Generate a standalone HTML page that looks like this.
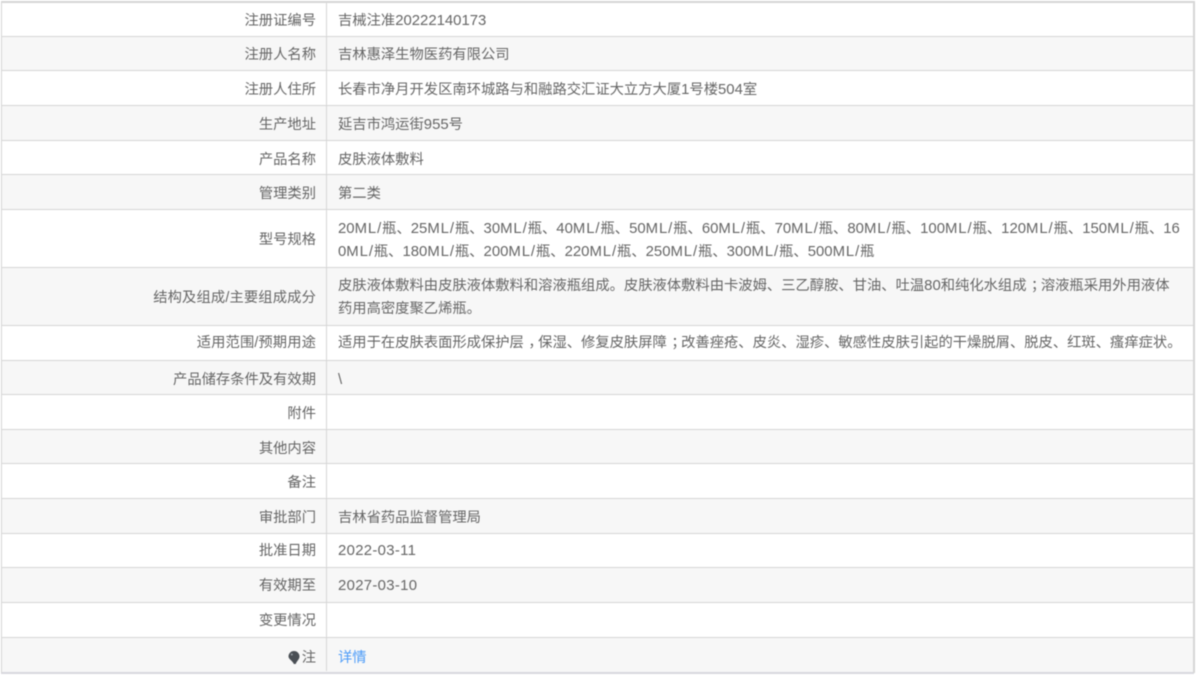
<!DOCTYPE html>
<html lang="zh-CN"><head><meta charset="utf-8"><title>注册信息</title>
<style>
html,body{margin:0;padding:0;background:#fff}
#p{position:relative;width:1200px;height:681px;overflow:hidden;background:#fff;font:14.3px/20px "Liberation Sans","Noto Sans CJK SC",sans-serif;color:#666;filter:blur(.4px)}
.r{position:absolute;left:1px;width:1193px;box-sizing:border-box;border-bottom:1px solid #d6d6d6}
.r.g{background:#f7f7f7}
.l{position:absolute;right:878px;top:2px;bottom:-2px;display:flex;align-items:center;white-space:nowrap}
.v{position:absolute;left:337px;white-space:nowrap;top:2px;bottom:-2px;display:flex;flex-direction:column;justify-content:center}
.s{line-height:23px}
.o{top:1px;bottom:-1px}
.z{top:0;bottom:0}
.f{position:absolute;background:#d6d6d6}
b{font:inherit;font-size:14.9px}
u{text-decoration:none;font-size:14.9px;letter-spacing:.92px}
em{font-style:normal;position:relative;left:4.500px}
</style></head><body><div id="p">
<div class="r" style="top:2px;height:35px"><div class="l">注册证编号</div><div class="v"><div>吉械注准<b>20222140173</b></div></div></div>
<div class="r g" style="top:37px;height:34px"><div class="l o">注册人名称</div><div class="v o">吉林惠泽生物医药有限公司</div></div>
<div class="r" style="top:71px;height:35px"><div class="l">注册人住所</div><div class="v"><div>长春市净月开发区南环城路与和融路交汇证大立方大厦<b>1</b>号楼<b>504</b>室</div></div></div>
<div class="r g" style="top:106px;height:35px"><div class="l">生产地址</div><div class="v"><div>延吉市鸿运街<b>955</b>号</div></div></div>
<div class="r" style="top:141px;height:34px"><div class="l">产品名称</div><div class="v">皮肤液体敷料</div></div>
<div class="r g" style="top:175px;height:35px"><div class="l">管理类别</div><div class="v">第二类</div></div>
<div class="r" style="top:210px;height:58px"><div class="l o">型号规格</div><div class="v s"><div><b>20</b><u>ML/</u>瓶、<b>25</b><u>ML/</u>瓶、<b>30</b><u>ML/</u>瓶、<b>40</b><u>ML/</u>瓶、<b>50</b><u>ML/</u>瓶、<b>60</b><u>ML/</u>瓶、<b>70</b><u>ML/</u>瓶、<b>80</b><u>ML/</u>瓶、<b>100</b><u>ML/</u>瓶、<b>120</b><u>ML/</u>瓶、<b>150</b><u>ML/</u>瓶、<b>16</b></div><div><b>0</b><u>ML/</u>瓶、<b>180</b><u>ML/</u>瓶、<b>200</b><u>ML/</u>瓶、<b>220</b><u>ML/</u>瓶、<b>250</b><u>ML/</u>瓶、<b>300</b><u>ML/</u>瓶、<b>500</b><u>ML/</u>瓶</div></div></div>
<div class="r g" style="top:268px;height:58px"><div class="l o" style="letter-spacing:.13px">结构及组成/主要组成成分</div><div class="v s o"><div>皮肤液体敷料由皮肤液体敷料和溶液瓶组成。皮肤液体敷料由卡波姆、三乙醇胺、甘油、吐温<b>80</b>和纯化水组成<em>；</em>溶液瓶采用外用液体</div><div>药用高密度聚乙烯瓶。</div></div></div>
<div class="r" style="top:326px;height:35px"><div class="l z" style="letter-spacing:.1px">适用范围/预期用途</div><div class="v z"><div>适用于在皮肤表面形成保护层<em>，</em>保湿、修复皮肤屏障<em>；</em>改善痤疮、皮炎、湿疹、敏感性皮肤引起的干燥脱屑、脱皮、红斑、瘙痒症状。</div></div></div>
<div class="r g" style="top:361px;height:34px"><div class="l">产品储存条件及有效期</div><div class="v"><b>\</b></div></div>
<div class="r" style="top:395px;height:35px"><div class="l">附件</div></div>
<div class="r g" style="top:430px;height:34px"><div class="l">其他内容</div></div>
<div class="r" style="top:464px;height:35px"><div class="l">备注</div></div>
<div class="r g" style="top:499px;height:35px"><div class="l">审批部门</div><div class="v">吉林省药品监督管理局</div></div>
<div class="r" style="top:534px;height:34px"><div class="l z">批准日期</div><div class="v z"><div><b style="letter-spacing:.32px">2022-03-11</b></div></div></div>
<div class="r g" style="top:568px;height:35px"><div class="l o">有效期至</div><div class="v o"><div><b style="letter-spacing:.32px">2027-03-10</b></div></div></div>
<div class="r" style="top:603px;height:35px"><div class="l o">变更情况</div></div>
<div class="r g" style="top:638px;height:36px;border-bottom:2px solid #d8d8de"><div class="l" style="top:3px;bottom:-3px"><svg width="12" height="15" viewBox="0 0 12 15" style="margin-right:1.500px;margin-top:-2px"><path d="M6 1a5.500 5.500 0 0 1 5.500 5.500c0 2.800-2.600 4.300-3.800 7.500H5.800C4.800 11 .5 9.300.5 6.500A5.500 5.500 0 0 1 6 1z" fill="#4a4f55"/><circle cx="3.800" cy="4.500" r="1" fill="#9aa0a6"/></svg>注</div><div class="v" style="color:#4d9cf8;top:3px;bottom:-3px">详情</div></div>
<div class="f" style="left:1px;top:1px;width:1193px;height:2px"></div>
<div class="f" style="left:1px;top:1px;width:1px;height:672px"></div>
<div class="f" style="left:1193px;top:1px;width:2px;height:672px"></div>
<div class="f" style="left:326px;top:3px;width:1px;height:668px"></div>
</div></body></html>
